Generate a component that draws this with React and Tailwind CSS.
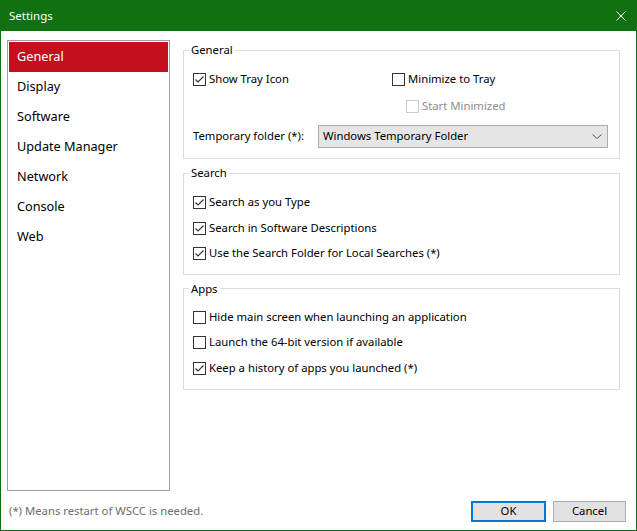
import React from 'react';

const navItems = ['General', 'Display', 'Software', 'Update Manager', 'Network', 'Console', 'Web'];

const CheckBox = ({ checked, disabled }) => (
  <svg width="13" height="13" viewBox="0 0 13 13" className="shrink-0">
    <rect x="0.5" y="0.5" width="12" height="12" fill="#fff" stroke={disabled ? '#cccccc' : '#333333'} />
    {checked && (
      <path d="M2.5 6.5 L5 9 L10.5 3.5" fill="none" stroke="#333333" strokeWidth="1.1" />
    )}
  </svg>
);

const Check = ({ label, checked, disabled, className = '' }) => (
  <label className={`flex items-center gap-[3px] ${disabled ? 'text-[#8d8d8d]' : 'text-[#000]'} ${className}`}>
    <CheckBox checked={checked} disabled={disabled} />
    <span>{label}</span>
  </label>
);

const Group = ({ title, children, className = '' }) => (
  <fieldset className={`border border-[#dcdcdc] pl-[9px] pr-[11px] ${className}`}>
    <legend className="-ml-[4px] px-[2px] leading-[16px]">{title}</legend>
    {children}
  </fieldset>
);

export default function App() {
  return (
    <div
      className="w-[637px] h-[531px] bg-[#117011] p-px flex flex-col text-[11.3px] text-black"
      style={{ fontFamily: '"Segoe UI", "Noto Sans", sans-serif' }}
    >
      {/* Title bar */}
      <div className="h-[30px] flex items-center justify-between pl-[8px] pr-[10px] text-white text-[11.5px]">
        <span>Settings</span>
        <svg width="10" height="10" viewBox="0 0 10 10">
          <path d="M0.5 0.5 L9.5 9.5 M9.5 0.5 L0.5 9.5" stroke="#fff" strokeWidth="1" />
        </svg>
      </div>

      <div className="flex-1 bg-white pt-[9px] pl-[6px] pr-[10px] pb-[8px] flex flex-col">
        <div className="flex h-[451px]">
          {/* Left list */}
          <ul className="w-[163px] h-full border border-[#a0a0a0] p-px text-[12.7px]">
            {navItems.map((item, i) => (
              <li
                key={item}
                className={`h-[30px] flex items-center pl-[8px] ${i === 0 ? 'bg-[#c50f1f] text-white' : ''}`}
              >
                {item}
              </li>
            ))}
          </ul>

          {/* Right panel */}
          <div className="ml-[13px] mt-[2px] w-[437px] flex flex-col">
            <Group title="General">
              <div className="flex items-center h-[26px] mt-[8px]">
                <Check label="Show Tray Icon" checked className="w-[199px]" />
                <Check label="Minimize to Tray" />
              </div>
              <div className="flex items-center h-[28px]">
                <Check label="Start Minimized" disabled className="ml-[213px]" />
              </div>
              <div className="flex items-center mt-[5px] mb-[10px]">
                <span className="w-[125px]">Temporary folder (*):</span>
                <div className="flex-1 h-[23px] bg-[#e5e5e5] border border-[#adadad] flex items-center justify-between pl-[4px] pr-[5px]">
                  <span>Windows Temporary Folder</span>
                  <svg width="10" height="5" viewBox="0 0 10 5">
                    <path d="M0.5 0.5 L5 4.5 L9.5 0.5" fill="none" stroke="#555" strokeWidth="1" />
                  </svg>
                </div>
              </div>
            </Group>

            <Group title="Search" className="mt-[6px]">
              <div className="flex flex-col mt-[9px] mb-[7px]">
                <Check label="Search as you Type" checked className="h-[25.5px]" />
                <Check label="Search in Software Descriptions" checked className="h-[25.5px]" />
                <Check label="Use the Search Folder for Local Searches (*)" checked className="h-[25.5px]" />
              </div>
            </Group>

            <Group title="Apps" className="mt-[6px]">
              <div className="flex flex-col mt-[8px] mb-[8px]">
                <Check label="Hide main screen when launching an application" className="h-[25.5px]" />
                <Check label="Launch the 64-bit version if available" className="h-[25.5px]" />
                <Check label="Keep a history of apps you launched (*)" checked className="h-[25.5px]" />
              </div>
            </Group>
          </div>
        </div>

        {/* Footer */}
        <div className="mt-[10px] h-[21px] flex items-center justify-between pl-[2px]">
          <span className="text-[#6d6d6d]">(*) Means restart of WSCC is needed.</span>
          <div className="flex gap-[7px]">
            <button className="w-[75px] h-[21px] bg-[#e1e1e1] border-2 border-[#0078d7] flex items-center justify-center">
              OK
            </button>
            <button className="w-[73px] h-[21px] bg-[#e1e1e1] border border-[#adadad] flex items-center justify-center">
              Cancel
            </button>
          </div>
        </div>
      </div>
    </div>
  );
}
